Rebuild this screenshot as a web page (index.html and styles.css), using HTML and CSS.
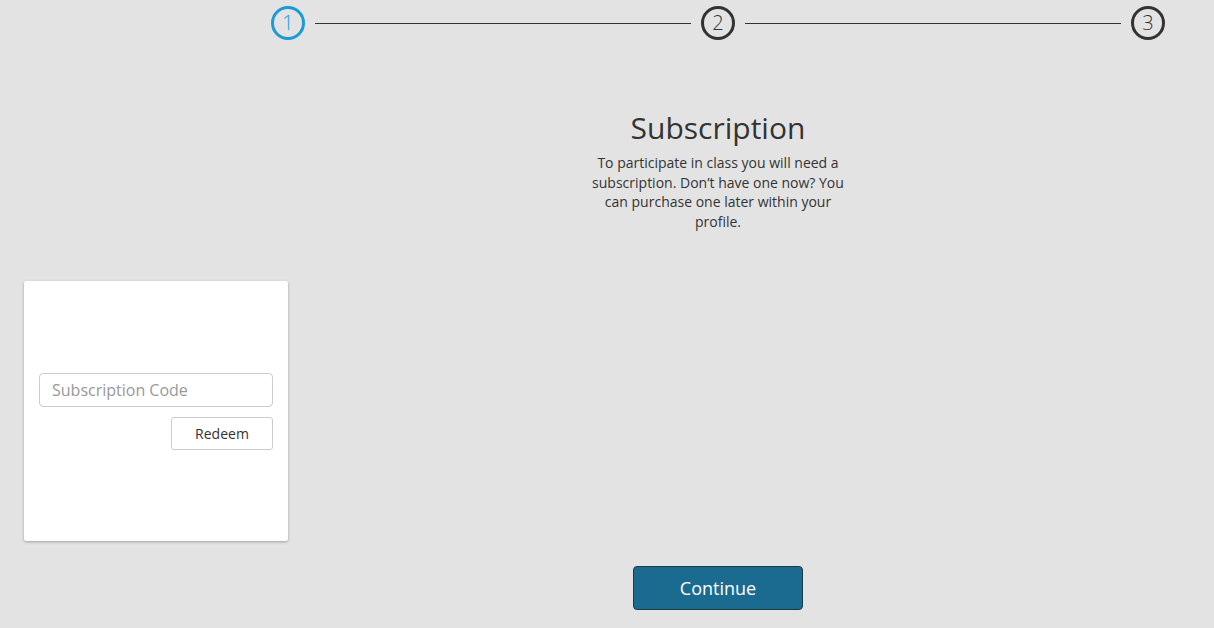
FILE: index.html
```html
<!DOCTYPE html>
<html lang="en">
<head>
	<meta charset="UTF-8">
	<meta name="viewport" content="width=device-width, initial-scale=1.0">
	<title>Subscription</title>
	<link rel="stylesheet" href="styles.css">
</head>
<body>
	<div class="steps">
		<span class="step active">1</span>
		<span class="step-line"></span>
		<span class="step">2</span>
		<span class="step-line"></span>
		<span class="step">3</span>
	</div>

	<div class="intro">
		<h1>Subscription</h1>
		<p>To participate in class you will need a subscription. Don’t have one now? You can purchase one later within your profile.</p>
	</div>

	<div class="plans">
		<div class="card">
			<form action="" class="redeem-form">
				<input type="text" name="code" placeholder="Subscription Code">
				<button type="button" class="btn-redeem">Redeem</button>
			</form>
		</div>
	</div>

	<div class="actions">
		<button type="button" class="btn-continue">Continue</button>
	</div>
</body>
</html>
```

FILE: styles.css
```css
* {
	margin: 0;
	padding: 0;
	box-sizing: border-box;
}

body {
	background-color: #e3e3e3;
	color: #333333;
	font-family: "Open Sans", "Liberation Sans", sans-serif;
}

/* Stepper */
.steps {
	display: flex;
	align-items: center;
	width: 894px;
	margin-left: 271px;
	padding-top: 6px;
}

.step {
	display: flex;
	align-items: center;
	justify-content: center;
	width: 34px;
	height: 34px;
	border: 3px solid #333333;
	border-radius: 50%;
	font-size: 20px;
	font-weight: 300;
	line-height: 1;
	color: #333333;
}

.step.active {
	border-color: #1a9bd7;
	color: #1a9bd7;
}

.step-line {
	flex: 1;
	height: 1px;
	margin: 0 10px;
	background-color: #333333;
}

/* Intro text */
.intro {
	width: 894px;
	margin-left: 271px;
	text-align: center;
}

.intro h1 {
	margin-top: 68px;
	font-size: 30px;
	font-weight: 400;
	line-height: 40px;
}

.intro p {
	width: 264px;
	margin: 5px auto 0;
	font-size: 14px;
	line-height: 19.5px;
}

/* Plan cards */
.plans {
	display: flex;
	padding-left: 24px;
	margin-top: 50px;
}

.card {
	display: flex;
	align-items: center;
	width: 264px;
	height: 260px;
	padding: 0 15px;
	border-radius: 2px;
	background-color: #ffffff;
	box-shadow: 0 1px 3px rgba(0, 0, 0, .3);
}

.redeem-form {
	display: flex;
	flex-direction: column;
	align-items: flex-end;
	width: 100%;
	gap: 10px;
}

.redeem-form input {
	width: 100%;
	height: 34px;
	padding: 0 12px;
	border: 1px solid #cccccc;
	border-radius: 4px;
	outline: none;
	font-family: inherit;
	font-size: 16px;
	color: #333333;
}

.redeem-form input::placeholder {
	color: #999999;
}

.btn-redeem {
	width: 102px;
	height: 33px;
	border: 1px solid #cccccc;
	border-radius: 3px;
	background-color: #ffffff;
	font-family: inherit;
	font-size: 14px;
	color: #333333;
	cursor: pointer;
}

/* Continue */
.actions {
	display: flex;
	justify-content: center;
	width: 894px;
	margin-left: 271px;
	margin-top: 25px;
}

.btn-continue {
	width: 170px;
	height: 44px;
	border: 1px solid #1d3a4a;
	border-radius: 4px;
	background-color: #1b6a8f;
	font-family: inherit;
	font-size: 18px;
	color: #ffffff;
	cursor: pointer;
}
```
